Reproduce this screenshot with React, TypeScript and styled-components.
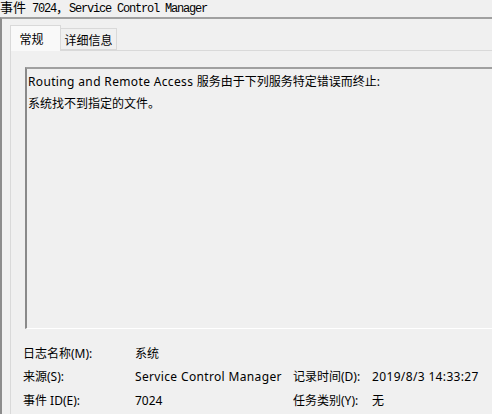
import React from "react";
import styled, { createGlobalStyle } from "styled-components";

const GlobalStyle = createGlobalStyle`
  html, body {
    margin: 0;
    padding: 0;
    background: #f0f0f0;
    overflow: hidden;
  }
`;

const Window = styled.div`
  width: 492px;
  height: 414px;
  overflow: hidden;
  background: #f0f0f0;
  color: #000;
  font-family: "Noto Sans", "Noto Sans CJK SC", sans-serif;
  font-size: 12px;
`;

const Title = styled.div`
  height: 17px;
  line-height: 13px;
  font-family: "Noto Sans CJK SC", sans-serif;
  font-size: 13px;
  white-space: nowrap;
  overflow: hidden;
`;

const Mono = styled.span`
  font-family: "Liberation Mono", "Noto Sans CJK SC", monospace;
  font-size: 12px;
  letter-spacing: -1.2px;
`;

const Latin = styled.span`
  letter-spacing: 0.35px;
`;

const Frame = styled.div`
  border-top: 2px solid #a0a0a0;
  border-left: 2px solid #8c8c8c;
  padding: 5px 0 0 8px;
  height: 400px;
  box-sizing: border-box;
`;

const TabRow = styled.div`
  display: flex;
  align-items: flex-end;
  height: 26px;
  position: relative;
  z-index: 1;
`;

const Tab = styled.div<{ $active?: boolean }>`
  box-sizing: border-box;
  display: flex;
  align-items: center;
  justify-content: center;
  height: ${(p) => (p.$active ? "26px" : "22px")};
  width: ${(p) => (p.$active ? "51px" : "56px")};
  margin-bottom: ${(p) => (p.$active ? "-1px" : "0")};
  border: 1px solid #d9d9d9;
  border-bottom: ${(p) => (p.$active ? "none" : "1px solid #d9d9d9")};
  border-left: ${(p) => (p.$active ? "1px solid #d9d9d9" : "none")};
  background: ${(p) => (p.$active ? "#f9f9f9" : "#f0f0f0")};
  font-family: "Noto Sans CJK SC", sans-serif;
  font-size: 12px;
  padding-top: ${(p) => (p.$active ? "0" : "1px")};
  padding-right: ${(p) => (p.$active ? "8px" : "0")};
`;

const Panel = styled.div`
  width: 620px;
  height: 380px;
  border: 1px solid #d9d9d9;
  border-right: none;
  box-sizing: border-box;
  padding: 16px 0 0 14px;
`;

const MessageBox = styled.div`
  box-sizing: border-box;
  height: 262px;
  width: 590px;
  border-top: 2px solid #a0a0a0;
  border-left: 2px solid #8a8a8a;
  border-bottom: 1px solid #ffffff;
  padding: 2px 0 0 1px;
  line-height: 22px;
`;

const MessageLine = styled.div`
  white-space: nowrap;
`;

const InfoGrid = styled.div`
  display: grid;
  grid-template-columns: 112px 158px 79px 1fr;
  grid-auto-rows: 23.5px;
  align-items: center;
  margin: 13px 0 0 -2px;
  line-height: 16px;
`;

const Cell = styled.div`
  white-space: nowrap;
`;

export default function App() {
  return (
    <>
      <GlobalStyle />
      <Window>
        <Title>
          事件<Mono> 7024</Mono>，<Mono>Service Control Manager</Mono>
        </Title>
        <Frame>
          <TabRow>
            <Tab $active>常规</Tab>
            <Tab>详细信息</Tab>
          </TabRow>
          <Panel>
            <MessageBox>
              <MessageLine>
                <Latin>Routing and Remote Access </Latin>服务由于下列服务特定错误而终止:
              </MessageLine>
              <MessageLine>系统找不到指定的文件。</MessageLine>
            </MessageBox>
            <InfoGrid>
              <Cell>日志名称(M):</Cell>
              <Cell>系统</Cell>
              <Cell />
              <Cell />
              <Cell>来源(S):</Cell>
              <Cell>
                <Latin>Service Control Manager</Latin>
              </Cell>
              <Cell>记录时间(D):</Cell>
              <Cell>
                <Latin>2019/8/3 14:33:27</Latin>
              </Cell>
              <Cell>事件 ID(E):</Cell>
              <Cell>7024</Cell>
              <Cell>任务类别(Y):</Cell>
              <Cell>无</Cell>
            </InfoGrid>
          </Panel>
        </Frame>
      </Window>
    </>
  );
}
